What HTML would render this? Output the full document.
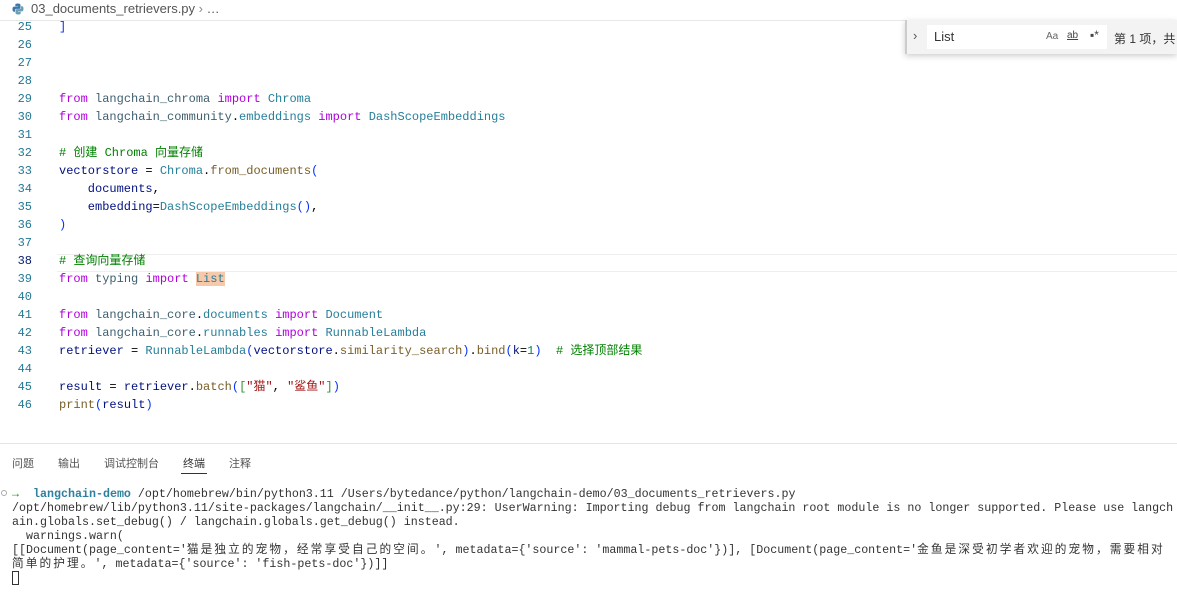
<!DOCTYPE html>
<html><head><meta charset="utf-8"><style>
*{margin:0;padding:0;box-sizing:border-box}
body{width:1177px;height:595px;background:#fff;position:relative;overflow:hidden;font-family:"Liberation Mono","Noto Sans CJK SC",monospace}
.bc{position:absolute;left:0;top:0;width:1177px;height:20px;font-family:"Liberation Sans",sans-serif;font-size:13px;color:#555;padding-left:31px;line-height:18px}
.ln{position:absolute;left:0;width:32px;text-align:right;color:#237893;font-size:12px;line-height:18px}
.cd{position:absolute;left:59px;font-size:12px;line-height:18px;white-space:pre;color:#001080}
.k{color:#af00db}.m{color:#3f5f6f}.c{color:#267f99}.f{color:#795e26}.g{color:#008000}.b{color:#0431fa}.s{color:#a31515}.n{color:#098658}.p{color:#000}
.hl{position:absolute;left:57px;top:254px;width:1120px;height:18px;border-top:1px solid #eee;border-bottom:1px solid #eee}
.find{position:absolute;left:905px;top:20px;width:272px;height:34px;background:#f3f3f3;border-left:2px solid #ccc;box-shadow:0 2px 6px rgba(0,0,0,.2);font-family:"Liberation Sans","Noto Sans CJK SC",sans-serif}
.tabs{position:absolute;top:455px;font-family:"Liberation Sans","Noto Sans CJK SC",sans-serif;font-size:11px;color:#555}
.t{position:absolute;left:12px;font-size:11.66px;line-height:14px;white-space:pre;color:#333}
.w{letter-spacing:2.1px}
</style></head><body>
<div class="bc"><svg style="position:absolute;left:12px;top:3px" width="12" height="12" viewBox="0 0 12 12"><path d="M6 0.5C3 0.5 3.3 1.8 3.3 1.8V3.2H6.1V3.6H2.2S0.5 3.4 0.5 6.1 2 8.7 2 8.7H3V7.4S2.9 5.9 4.4 5.9H7.1S8.5 5.9 8.5 4.6V2.1S8.7 0.5 6 0.5z" fill="#3c78aa"/><path d="M6 11.5C9 11.5 8.7 10.2 8.7 10.2V8.8H5.9V8.4H9.8S11.5 8.6 11.5 5.9 10 3.3 10 3.3H9V4.6S9.1 6.1 7.6 6.1H4.9S3.5 6.1 3.5 7.4V9.9S3.3 11.5 6 11.5z" fill="#6a9fb5"/></svg>03_documents_retrievers.py <span style="color:#888">›</span> …</div>
<div style="position:absolute;top:20px;left:0;width:1177px;height:1px;background:#e8e8e8"></div>
<div class="hl"></div>
<div class="ln" style="top:18px">25</div><div class="cd b" style="top:18px">]</div>
<div class="ln" style="top:36px">26</div>
<div class="ln" style="top:54px">27</div>
<div class="ln" style="top:72px">28</div>
<div class="ln" style="top:90px">29</div><div class="cd" style="top:90px"><span class="k">from</span> <span class="m">langchain_chroma</span> <span class="k">import</span> <span class="c">Chroma</span></div>
<div class="ln" style="top:108px">30</div><div class="cd" style="top:108px"><span class="k">from</span> <span class="m">langchain_community</span><span class="p">.</span><span class="c">embeddings</span> <span class="k">import</span> <span class="c">DashScopeEmbeddings</span></div>
<div class="ln" style="top:126px">31</div>
<div class="ln" style="top:144px">32</div><div class="cd g" style="top:144px"># 创建 Chroma 向量存储</div>
<div class="ln" style="top:162px">33</div><div class="cd" style="top:162px">vectorstore <span class="p">=</span> <span class="c">Chroma</span><span class="p">.</span><span class="f">from_documents</span><span class="b">(</span></div>
<div class="ln" style="top:180px">34</div><div class="cd" style="top:180px">    documents<span class="p">,</span></div>
<div class="ln" style="top:198px">35</div><div class="cd" style="top:198px">    embedding<span class="p">=</span><span class="c">DashScopeEmbeddings</span><span class="b">()</span><span class="p">,</span></div>
<div class="ln" style="top:216px">36</div><div class="cd b" style="top:216px">)</div>
<div class="ln" style="top:234px">37</div>
<div class="ln" style="top:252px;color:#0b216f">38</div><div class="cd g" style="top:252px"># 查询向量存储</div>
<div class="ln" style="top:270px">39</div><div class="cd" style="top:270px"><span class="k">from</span> <span class="m">typing</span> <span class="k">import</span> <span class="c" style="background:#f6c9ab">List</span></div>
<div class="ln" style="top:288px">40</div>
<div class="ln" style="top:306px">41</div><div class="cd" style="top:306px"><span class="k">from</span> <span class="m">langchain_core</span><span class="p">.</span><span class="c">documents</span> <span class="k">import</span> <span class="c">Document</span></div>
<div class="ln" style="top:324px">42</div><div class="cd" style="top:324px"><span class="k">from</span> <span class="m">langchain_core</span><span class="p">.</span><span class="c">runnables</span> <span class="k">import</span> <span class="c">RunnableLambda</span></div>
<div class="ln" style="top:342px">43</div><div class="cd" style="top:342px">retriever <span class="p">=</span> <span class="c">RunnableLambda</span><span class="b">(</span>vectorstore<span class="p">.</span><span class="f">similarity_search</span><span class="b">)</span><span class="p">.</span><span class="f">bind</span><span class="b">(</span>k<span class="p">=</span><span class="n">1</span><span class="b">)</span>  <span class="g"># 选择顶部结果</span></div>
<div class="ln" style="top:360px">44</div>
<div class="ln" style="top:378px">45</div><div class="cd" style="top:378px">result <span class="p">=</span> retriever<span class="p">.</span><span class="f">batch</span><span class="b">(</span><span style="color:#319331">[</span><span class="s">"猫"</span><span class="p">,</span> <span class="s">"鲨鱼"</span><span style="color:#319331">]</span><span class="b">)</span></div>
<div class="ln" style="top:396px">46</div><div class="cd" style="top:396px"><span class="f">print</span><span class="b">(</span>result<span class="b">)</span></div>

<div class="find">
<span style="position:absolute;left:6px;top:8px;font-size:13px;color:#555">›</span>
<div style="position:absolute;left:20px;top:5px;width:180px;height:24px;background:#fff"></div>
<span style="position:absolute;left:27px;top:9px;font-size:13px;color:#333">List</span>
<span style="position:absolute;left:139px;top:11px;font-size:10px;color:#666">Aa</span>
<span style="position:absolute;left:160px;top:10px;font-size:10px;color:#444;text-decoration:underline">ab</span>
<span style="position:absolute;left:183px;top:8px;font-size:12px;color:#444">▪*</span>
<span style="position:absolute;left:207px;top:10px;font-size:12px;color:#333">第 1 项，共</span>
</div>

<div style="position:absolute;top:443px;left:0;width:1177px;height:1px;background:#e5e5e5"></div>
<div class="tabs" style="left:12px">问题</div>
<div class="tabs" style="left:58px">输出</div>
<div class="tabs" style="left:104px">调试控制台</div>
<div class="tabs" style="left:183px;color:#333">终端</div>
<div style="position:absolute;left:181px;top:473px;width:26px;height:1px;background:#333"></div>
<div class="tabs" style="left:229px">注释</div>

<div style="position:absolute;left:1px;top:490px;width:6px;height:6px;border:1px solid #aaa;border-radius:50%"></div>
<div class="t" style="top:487px;left:12px"><span style="color:#00a000">→</span>  <b style="color:#2f7f9f">langchain-demo</b> /opt/homebrew/bin/python3.11 /Users/bytedance/python/langchain-demo/03_documents_retrievers.py</div>
<div class="t" style="top:501px">/opt/homebrew/lib/python3.11/site-packages/langchain/__init__.py:29: UserWarning: Importing debug from langchain root module is no longer supported. Please use langch</div>
<div class="t" style="top:515px">ain.globals.set_debug() / langchain.globals.get_debug() instead.</div>
<div class="t" style="top:529px">  warnings.warn(</div>
<div class="t" style="top:543px">[[Document(page_content='<span class="w">猫是独立的宠物，经常享受自己的空间。</span>', metadata={'source': 'mammal-pets-doc'})], [Document(page_content='<span class="w">金鱼是深受初学者欢迎的宠物，需要相对</span></div>
<div class="t" style="top:557px"><span class="w">简单的护理。</span>', metadata={'source': 'fish-pets-doc'})]]</div>
<div style="position:absolute;left:12px;top:571px;width:7px;height:14px;border:1px solid #333"></div>
</body></html>
